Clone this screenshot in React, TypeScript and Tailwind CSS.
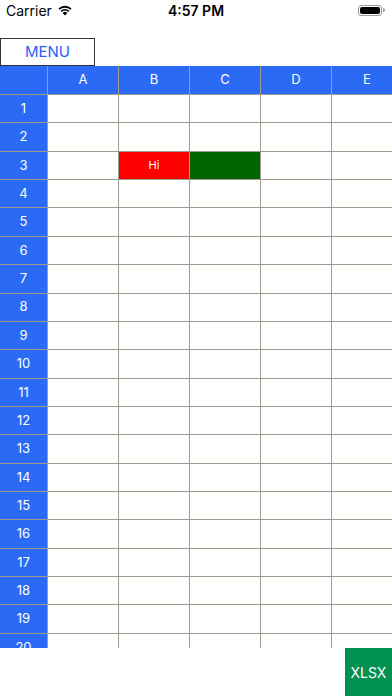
const cols = ['A', 'B', 'C', 'D', 'E'];
const rows = Array.from({ length: 20 }, (_, i) => i + 1);

function Wifi() {
  return (
    <svg width="16" height="12" viewBox="0 0 16 12">
      <path d="M8 11.5 L5.6 8.9 A3.6 3.6 0 0 1 10.4 8.9 Z" fill="#000" />
      <path d="M3.6 6.8 A6.4 6.4 0 0 1 12.4 6.8 L11.2 8.1 A4.7 4.7 0 0 0 4.8 8.1 Z" fill="#000" />
      <path d="M1.4 4.5 A9.6 9.6 0 0 1 14.6 4.5 L13.4 5.8 A7.8 7.8 0 0 0 2.6 5.8 Z" fill="#000" />
    </svg>
  );
}

function Battery() {
  return (
    <div className="flex items-center">
      <div className="w-[24px] h-[11px] rounded-[3px] border border-[#9a9a9a] p-[1px]">
        <div className="w-full h-full rounded-[2px] bg-black" />
      </div>
      <div className="w-[1.5px] h-[4px] bg-[#9a9a9a] rounded-r-sm ml-[1px]" />
    </div>
  );
}

export default function App() {
  return (
    <div className="w-[392px] h-[696px] bg-white flex flex-col overflow-hidden" style={{ fontFamily: 'Inter, "Liberation Sans", sans-serif' }}>
      {/* status bar */}
      <div className="h-[20px] flex items-center justify-between px-[6px] text-[14px] text-black">
        <div className="flex items-center gap-[5px] w-[120px]"><span>Carrier</span><Wifi /></div>
        <span className="font-semibold">4:57 PM</span>
        <div className="w-[120px] flex justify-end pr-[1px]"><Battery /></div>
      </div>
      <div className="h-[18px]" />
      <button className="w-[95px] h-[28px] border border-[#333] text-[15px] text-[#2a5cff] bg-white">MENU</button>

      {/* sheet */}
      <div className="h-[582px] overflow-hidden">
        <div
          className="grid gap-px bg-[#a39a8f] w-[403px]"
          style={{ gridTemplateColumns: '47px repeat(5, 70px)', gridTemplateRows: '28px repeat(20, 27.37px)' }}
        >
          <div className="bg-[#2a6af5]" />
          {cols.map((c) => (
            <div key={c} className="bg-[#2a6af5] text-white text-[13px] flex items-center justify-center">{c}</div>
          ))}
          {rows.map((r) => (
            <>
              <div key={`h${r}`} className="bg-[#2a6af5] text-white text-[13px] flex items-center justify-center">{r}</div>
              {cols.map((c) => {
                let cls = 'bg-white';
                let txt = '';
                if (r === 3 && c === 'B') { cls = 'bg-[#ff0000] text-white text-[11px]'; txt = 'Hi'; }
                if (r === 3 && c === 'C') cls = 'bg-[#006400]';
                return <div key={`${r}${c}`} className={`${cls} flex items-center justify-center`}>{txt}</div>;
              })}
            </>
          ))}
        </div>
      </div>

      <div className="flex-1 flex justify-end">
        <button className="w-[47px] h-[48px] bg-[#009051] text-white text-[14px]">XLSX</button>
      </div>
    </div>
  );
}
